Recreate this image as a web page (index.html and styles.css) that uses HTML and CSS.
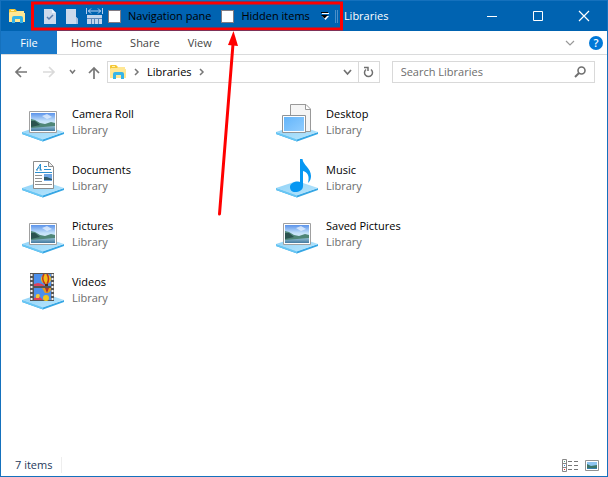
FILE: index.html
```html
<!DOCTYPE html>
<html lang="en">
<head>
<meta charset="utf-8">
<title>Libraries</title>
<link rel="stylesheet" href="styles.css">
</head>
<body>
<svg class="defs" aria-hidden="true">
  <defs>
    <linearGradient id="sky" x1="0" y1="0" x2="0" y2="1"><stop offset="0" stop-color="#5b93ea"/><stop offset=".45" stop-color="#c5e2fa"/><stop offset="1" stop-color="#e8f5fc"/></linearGradient>
    <linearGradient id="water" x1="0" y1="0" x2="0" y2="1"><stop offset="0" stop-color="#a5cde0"/><stop offset="1" stop-color="#42799f"/></linearGradient>
    <linearGradient id="tile" x1="0" y1="0" x2="1" y2="1"><stop offset="0" stop-color="#8fd2f7"/><stop offset="1" stop-color="#b9e6fd"/></linearGradient>
    <linearGradient id="screen" x1="0" y1="0" x2="1" y2="1"><stop offset="0" stop-color="#64b5fa"/><stop offset="1" stop-color="#90cdff"/></linearGradient>
    <symbol id="folder" viewBox="0 0 17 15">
      <path d="M0 1Q0 0 1 0H6L8 2H14V5H0Z" fill="#f4c736"/><path d="M2 1H5V2H2Z" fill="#fff2ae"/>
      <path d="M1 3H7L8 2H15V4H16V13H0V4Z" fill="#ffe794"/>
      <path d="M3 14V9Q3 7 5 7H12Q14 7 14 9V14H11V10H6V14Z" fill="#35b4e8"/>
    </symbol>
    <symbol id="base" viewBox="0 0 42 44">
      <path d="M0 32L21 39L42 32V34L21 41.500L0 34Z" fill="#36a6e4"/><path d="M0 32L21 39V41.500L0 34Z" fill="#68c6f4"/>
      <path d="M0 32L21 25L42 32L21 39.500Z" fill="url(#tile)"/>
    </symbol>
    <symbol id="photo" viewBox="0 0 42 44">
      <use href="#base" width="42" height="44"/>
      <path d="M7.500 11.500H34.500V32.500H7.500Z" fill="#fff" stroke="#a0a0a0"/>
      <path d="M9 13H33V31H9Z" fill="url(#sky)"/><path d="M9 25H33V31H9Z" fill="url(#water)"/>
      <path d="M20 16L25 14L30 17L25 19Z" fill="#eef7ff" opacity=".7"/>
      <path d="M9 19L13 20L18 23L23 24L29 22L33 23V26L21 27L9 28Z" fill="#4f8677"/>
      <path d="M9 21L13 21L18 25L9 27Z" fill="#2b534f"/>
    </symbol>
    <symbol id="document" viewBox="0 0 42 44">
      <use href="#base" width="42" height="44"/>
      <path d="M11.500 5.500H26.500L31.500 10.500V32.500H11.500Z" fill="#fff" stroke="#8c8c8c"/><path d="M26.500 6V10.500H31" fill="#eee" stroke="#8c8c8c"/>
      <path d="M14.500 14L18.500 8V14M16 12H18.500M14 14H16M17.500 14H20M22 10.500H25M22 13.500H29M13 16.500H30" fill="none" stroke="#2c8fce"/>
      <path d="M13 19.500H20M13 22.500H20M13 25.500H20M13 28.500H30" stroke="#909090"/>
      <path d="M22 18H30V25H22Z" fill="#6ea6e2"/><path d="M22 21L25 21L30 23V24H22Z" fill="#315a6a"/>
    </symbol>
    <symbol id="desktop" viewBox="0 0 42 44">
      <use href="#base" width="42" height="44"/>
      <path d="M14.500 4.500H30L34.500 9V31.500H14.500Z" fill="#f5f5f5" stroke="#999"/><path d="M29.500 5V9.500H34" fill="#fff" stroke="#999"/>
      <path d="M6.500 15.500H29.500V32.500H6.500Z" fill="#fff" stroke="#8e9499"/><path d="M8 17H28V31H8Z" fill="url(#screen)"/>
    </symbol>
    <symbol id="music" viewBox="0 0 42 44">
      <use href="#base" width="42" height="44"/>
      <path d="M24 3H26.500C27 9 35 12 35 20C35 23 34 25 32 27C34 19 31 16 27 15V30C27 34 23 36 19 36C16 36 14 34 14 31C14 27 19 25 24 26Z" fill="#0797f2"/>
    </symbol>
    <symbol id="video" viewBox="0 0 42 44">
      <use href="#base" width="42" height="44"/>
      <path d="M8 5H32V33H8Z" fill="#555"/><path d="M9.500 6V32M30.500 6V32" stroke="#f4f4f4" stroke-width="2" stroke-dasharray="2 2"/>
      <path d="M12 6H29V18H12ZM12 20H29V32H12Z" fill="#4b8fec"/>
      <path d="M12 16L16 15L20 16L23 18H12ZM12 30L17 28L21 32H12Z" fill="#df405c"/>
      <circle cx="24" cy="11" r="5" fill="#f2bd19"/><path d="M22 6Q19 11 23 16M25 6Q28 11 25 16" fill="none" stroke="#bc3424" stroke-width="1.500"/><path d="M23 16H26V18H23Z" fill="#513212"/>
      <path d="M20 20H29Q29 24 26 25H23Z" fill="#e49d20"/><path d="M23 20L25 25L27 20" fill="#a83233"/><circle cx="24" cy="30" r="3" fill="#f1c51b"/><path d="M14 30Q13 26 16 26Q19 26 17 30Z" fill="#f4c533"/>
    </symbol>
  </defs>
</svg>
<div class="window">
  <header class="titlebar">
    <svg class="folder" viewBox="0 0 17 15"><use href="#folder"/></svg>
    <div class="quick">
      <button class="tool" aria-label="Properties"><svg width="14" height="17" viewBox="0 0 14 17"><path d="M1 1H9L13 5V16H1Z" fill="#cbd9ec"/><path d="M9 1V5H13" fill="#eef5ff"/><path d="M4 9L6 11L10 7" fill="none" stroke="#577daf" stroke-width="1.500"/></svg></button>
      <button class="tool" aria-label="New folder"><svg width="14" height="17" viewBox="0 0 14 17"><path d="M1 1H11V9L13 11V16H1Z" fill="#cbd9ec"/><path d="M11 9V16H13V11Z" fill="#a8bfdf"/></svg></button>
      <button class="tool" aria-label="Size columns"><svg width="17" height="17" viewBox="0 0 17 17"><path d="M.5 0V6M16.500 0V6M2 3H15M5 .5L2.500 3L5 5.500M12 .5L14.500 3L12 5.500" fill="none" stroke="#b4cff1"/><path d="M1 7H16V16H1Z" fill="#c3d5ec"/><path d="M1 10.500H16M5.500 11V16M8.500 11V16M12.500 11V16" stroke="#5c86b8"/></svg></button>
      <label class="toggle"><input type="checkbox"><span>Navigation pane</span></label>
      <label class="toggle"><input type="checkbox"><span>Hidden items</span></label>
      <button class="customize" aria-label="Customize toolbar"><svg width="8" height="8" viewBox="0 0 8 8"><path d="M1 1.500H8" stroke="#fff"/><path d="M0 .5H7" stroke="#000"/><path d="M1 4H8L4.500 8Z" fill="#fff"/><path d="M0 3H7L3.500 6.500Z" fill="#000"/></svg></button>
    </div>
    <span class="grip"></span>
    <h1>Libraries</h1>
    <div class="controls">
      <button aria-label="Minimize"><svg width="12" height="12"><path d="M1 6.500H11" stroke="#fff"/></svg></button>
      <button aria-label="Maximize"><svg width="12" height="12"><path d="M1.500 1.500H10.500V10.500H1.500Z" fill="none" stroke="#fff"/></svg></button>
      <button aria-label="Close"><svg width="12" height="12"><path d="M1 1L11 11M11 1L1 11" stroke="#fff" stroke-width="1.200"/></svg></button>
    </div>
  </header>
  <nav class="tabs">
    <button class="file">File</button><button>Home</button><button>Share</button><button>View</button>
    <div class="tab-actions">
      <button class="expand" aria-label="Expand ribbon"><svg width="10" height="6"><path d="M1 1L5 5L9 1" fill="none" stroke="#999" stroke-width="1.200"/></svg></button>
      <button class="help" aria-label="Help">?</button>
    </div>
  </nav>
  <div class="navigation">
    <div class="history">
      <button aria-label="Back"><svg width="14" height="12"><path d="M13 6H2M7 1L2 6L7 11" fill="none" stroke="#777" stroke-width="1.700"/></svg></button>
      <button aria-label="Forward"><svg width="14" height="12"><path d="M1 6H12M7 1L12 6L7 11" fill="none" stroke="#dadada" stroke-width="1.700"/></svg></button>
      <button class="recent" aria-label="Recent locations"><svg width="7" height="6"><path d="M1 1L3.500 4L6 1" fill="none" stroke="#777" stroke-width="1.500"/></svg></button>
      <button aria-label="Up"><svg width="12" height="13"><path d="M6 13V2M1 7L6 2L11 7" fill="none" stroke="#777" stroke-width="1.700"/></svg></button>
    </div>
    <div class="address">
      <svg class="folder" viewBox="0 0 17 15"><use href="#folder"/></svg>
      <svg class="chevron" viewBox="0 0 6 8"><path d="M1 1L4 4L1 7" fill="none" stroke="#777" stroke-width="1.500"/></svg>
      <a href="#">Libraries</a>
      <svg class="chevron" viewBox="0 0 6 8"><path d="M1 1L4 4L1 7" fill="none" stroke="#777" stroke-width="1.500"/></svg>
      <button class="drop" aria-label="Previous locations"><svg width="9" height="7"><path d="M1 1L4.500 5L8 1" fill="none" stroke="#707070" stroke-width="1.700"/></svg></button>
      <button class="refresh" aria-label="Refresh"><svg width="11" height="12"><path d="M8 3.500A4 4 0 1 1 3 3.500M1 1.500H5V5" fill="none" stroke="#707070" stroke-width="1.500"/></svg></button>
    </div>
    <div class="search">
      <input type="search" placeholder="Search Libraries" aria-label="Search Libraries">
      <svg width="12" height="12"><circle cx="7.500" cy="4.500" r="3.500" fill="none" stroke="#707070" stroke-width="1.600"/><path d="M5 7L1 11" stroke="#707070" stroke-width="2"/></svg>
    </div>
  </div>
  <main class="items">
    <article><svg class="icon"><use href="#photo"/></svg><div><h2>Camera Roll</h2><p>Library</p></div></article>
    <article><svg class="icon"><use href="#desktop"/></svg><div><h2>Desktop</h2><p>Library</p></div></article>
    <article><svg class="icon"><use href="#document"/></svg><div><h2>Documents</h2><p>Library</p></div></article>
    <article><svg class="icon"><use href="#music"/></svg><div><h2>Music</h2><p>Library</p></div></article>
    <article><svg class="icon"><use href="#photo"/></svg><div><h2>Pictures</h2><p>Library</p></div></article>
    <article><svg class="icon"><use href="#photo"/></svg><div><h2>Saved Pictures</h2><p>Library</p></div></article>
    <article><svg class="icon"><use href="#video"/></svg><div><h2>Videos</h2><p>Library</p></div></article>
  </main>
  <footer class="status">
    <span class="count">7 items</span>
    <div class="views">
      <button aria-label="Details view"><svg width="16" height="13"><path d="M.5 .5H4.500V12.500H.5ZM1 4.500H4M1 8.500H4" fill="none" stroke="#888"/><path d="M6 2.500H10M12 2.500H16M6 6.500H10M12 6.500H16M6 10.500H10M12 10.500H16" stroke="#777"/><path d="M2 2H3V3H2Z" fill="#5a8"/><path d="M2 6H3V7H2Z" fill="#38d"/><path d="M2 10H3V11H2Z" fill="#e22"/></svg></button>
      <button aria-label="Large icons view"><svg width="14" height="11"><path d="M.5 .5H13.500V10.500H.5Z" fill="#fff" stroke="#929292"/><path d="M2 2H12V9H2Z" fill="#8dc4f1"/><path d="M2 4L6 6L12 5V8H2Z" fill="#3b7568"/><path d="M2 8H12V9H2Z" fill="#387fad"/></svg></button>
    </div>
  </footer>
</div>
<svg class="annotation" viewBox="0 0 320 220" aria-hidden="true">
  <path d="M32.500 3H341.500V29H32.500Z" fill="none" stroke="#f00" stroke-width="3"/>
  <path d="M219.500 214L233 44" fill="none" stroke="#f00" stroke-width="3" stroke-linecap="round"/><path d="M233.500 31L238 46L228 45Z" fill="#f00"/>
</svg>
</body>
</html>
```
FILE: styles.css
```css
* { box-sizing: border-box; }
body { margin: 0; font: 11px/16px "Open Sans", "Noto Sans", sans-serif; color: #000; }
button { display: flex; align-items: center; justify-content: center; margin: 0; padding: 0; border: 0; background: none; font: inherit; color: inherit; }
h1, h2, p { margin: 0; font: inherit; }
svg { display: block; flex: none; overflow: visible; }
.defs { position: absolute; width: 0; height: 0; }
.window { display: flex; flex-direction: column; min-height: 100vh; border: 1px solid #1571bd; background: #fff; }
.titlebar { display: flex; align-items: center; height: 30px; padding-left: 8px; background: #0063b1; }
.folder { width: 17px; height: 15px; }
.quick { display: flex; align-items: center; margin-left: 17px; }
.tool { margin-right: 8px; }
.tool:nth-child(2) { margin-right: 7px; }
.tool:nth-child(3) { margin-right: 5px; }
.toggle { display: flex; align-items: center; gap: 7px; margin-right: 10px; }
.toggle input { appearance: none; width: 13px; height: 13px; margin: 0; border: 1px solid #817b82; background: #fff; }
.customize { width: 10px; }
.grip { width: 3px; height: 13px; margin: 0 6px 0 5px; border: 1px solid #4b8fc9; border-width: 0 1px; }
.titlebar h1 { color: #fff; }
.controls { display: flex; margin-left: auto; }
.controls button { width: 46px; height: 30px; }
.tabs { display: flex; height: 24px; border-bottom: 1px solid #dadbdc; color: #444; }
.tabs > button { padding: 0 14px; }
.tabs .file { width: 56px; background: #1979ca; color: #fff; }
.tab-actions { display: flex; align-items: center; gap: 14px; margin-left: auto; padding-right: 4px; }
.help { width: 14px; height: 14px; border-radius: 50%; background: #0078d7; color: #fff; font-weight: 600; }
.navigation { display: flex; gap: 12px; padding: 6px 12px 0 13px; }
.history { display: flex; align-items: center; gap: 14px; margin-right: -5px; }
.history .recent { width: 7px; margin: 0 -2px 0 -1px; }
.address, .search { display: flex; align-items: center; height: 22px; border: 1px solid #d9d9d9; }
.address { flex: 1; min-width: 0; padding-left: 2px; }
.address a { color: inherit; text-decoration: none; }
.chevron { width: 6px; height: 8px; margin: 0 7px; }
.drop { width: 20px; height: 20px; margin-left: auto; }
.refresh { width: 21px; height: 20px; border-left: 1px solid #d9d9d9; }
.search { flex: none; width: 35%; padding: 0 8px; }
.search input { flex: 1; min-width: 0; padding: 0; border: 0; outline: 0; background: none; font: inherit; }
.search input::placeholder { color: #6d6d6d; opacity: 1; }
.items { display: grid; grid-template-columns: repeat(auto-fill, 254px); grid-auto-rows: 56px; align-content: start; flex: 1; padding: 11px 0 0 21px; }
.items article { display: flex; align-items: center; gap: 8px; }
.icon { width: 42px; height: 44px; }
.items p { color: #6d6d6d; }
.status { display: flex; align-items: center; height: 22px; padding: 0 8px 0 14px; color: #1e395b; }
.count { padding-right: 9px; border-right: 1px solid #eee; }
.views { display: flex; align-items: center; gap: 7px; margin-left: auto; }
.annotation { position: absolute; top: 0; left: 0; width: 320px; height: 220px; pointer-events: none; }
```
